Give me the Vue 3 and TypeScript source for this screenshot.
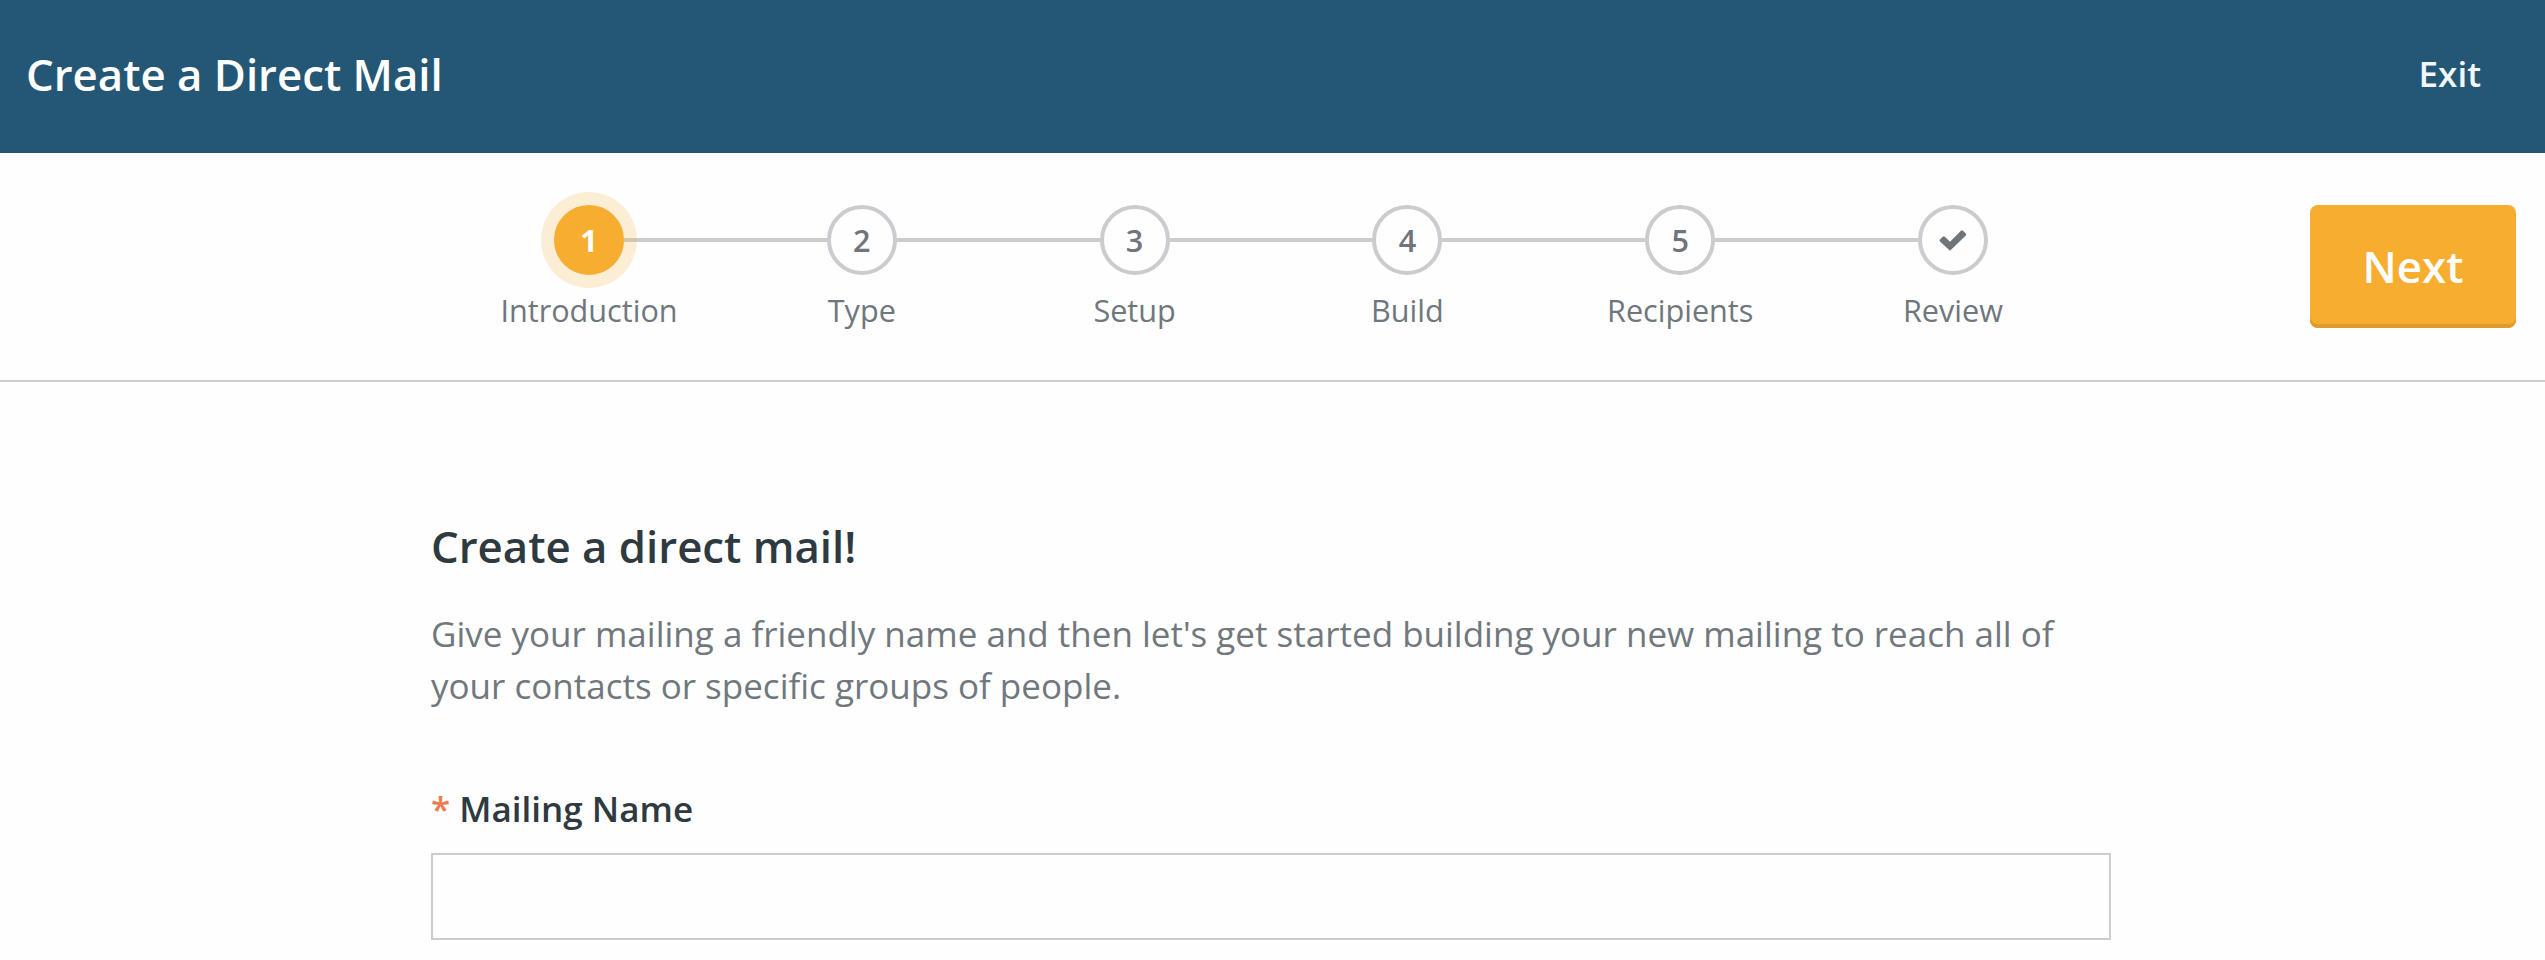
<script setup lang="ts">
import { ref } from 'vue'

interface Step {
  label: string
  marker: string
}

const steps: Step[] = [
  { label: 'Introduction', marker: '1' },
  { label: 'Type', marker: '2' },
  { label: 'Setup', marker: '3' },
  { label: 'Build', marker: '4' },
  { label: 'Recipients', marker: '5' },
  { label: 'Review', marker: '' },
]
const current = ref(0)
const mailingName = ref('')

function next(): void {
  current.value = Math.min(current.value + 1, steps.length - 1)
}
</script>

<template>
  <div class="page">
    <header class="topbar">
      <h1 class="title">Create a Direct Mail</h1>
      <a class="exit">Exit</a>
    </header>

    <nav class="wizard">
      <ol class="steps">
        <li v-for="(step, i) in steps" :key="step.label" class="step" :class="{ active: i === current }">
          <div class="track">
            <span class="line" :class="{ hidden: i === 0 }"></span>
            <span class="circle">
              <template v-if="step.marker">{{ step.marker }}</template>
              <svg v-else class="check" viewBox="0 0 28 22">
                <path d="M11 21.8 L1 12.5 Q0 11.5 1 10.5 L3.8 7.7 Q4.8 6.8 5.8 7.7 L11 12.8 L22 1.8 Q23 .9 24 1.8 L26.8 4.6 Q27.7 5.6 26.8 6.6 Z" />
              </svg>
            </span>
            <span class="line" :class="{ hidden: i === steps.length - 1 }"></span>
          </div>
          <span class="step-label">{{ step.label }}</span>
        </li>
      </ol>
      <button class="next" type="button" @click="next">Next</button>
    </nav>

    <main class="content">
      <h2 class="heading">Create a direct mail!</h2>
      <p class="intro">Give your mailing a friendly name and then let's get started building your new mailing to reach all of your contacts or specific groups of people.</p>
      <label class="label" for="mailing-name"><span class="required">*</span> Mailing Name</label>
      <input id="mailing-name" v-model="mailingName" class="input" type="text" />
    </main>
  </div>
</template>

<style>
body {
  margin: 0;
  background: #fff;
}
</style>

<style scoped>
.page {
  height: 960px;
  overflow: hidden;
  background: #fefefe;
  color: #6f777d;
  font-family: "Open Sans", "Noto Sans", sans-serif;
}
.topbar {
  box-sizing: border-box;
  height: 153px;
  padding: 0 64px 5px 26px;
  display: flex;
  align-items: center;
  justify-content: space-between;
  background: #245675;
  color: #fff;
}
.title {
  margin: 0;
  font-size: 43.75px;
  line-height: 60px;
  font-weight: 600;
}
.exit {
  font-size: 35px;
  line-height: 50px;
  font-weight: 600;
  color: #f1f6fa;
}
.wizard {
  box-sizing: border-box;
  height: 229px;
  padding: 52px 29px 0 452.6px;
  display: flex;
  align-items: flex-start;
  justify-content: space-between;
  border-bottom: 2px solid #cbcfd2;
}
.steps {
  margin: 0;
  padding: 0;
  display: flex;
  list-style: none;
}
.step {
  width: 272.8px;
  display: flex;
  flex-direction: column;
  align-items: center;
}
.track {
  width: 100%;
  display: flex;
  align-items: center;
}
.line {
  flex: 1;
  height: 4px;
  background: #cacccf;
}
.line.hidden {
  visibility: hidden;
}
.circle {
  box-sizing: border-box;
  width: 70px;
  height: 70px;
  border: 4px solid #cacccf;
  border-radius: 50%;
  display: flex;
  align-items: center;
  justify-content: center;
  font-size: 30.625px;
  line-height: 40px;
  font-weight: 600;
  color: #6f757b;
}
.active .circle {
  position: relative;
  border-color: #f7ad2f;
  background: #f7ad2f;
  box-shadow: 0 0 0 13px rgba(247, 173, 47, 0.2);
  font-weight: 700;
  color: #fff;
}
.check {
  width: 28px;
  height: 22px;
  fill: #6f757b;
}
.step-label {
  margin-top: 15px;
  font-size: 30.625px;
  line-height: 40px;
}
.next {
  box-sizing: border-box;
  width: 206px;
  height: 123px;
  padding: 0 0 1px;
  border: 0;
  border-radius: 8px;
  background: #f7ad2f;
  box-shadow: inset 0 -4px 0 #df9b2b;
  font: 600 43.75px/60px "Open Sans", "Noto Sans", sans-serif;
  color: #fff;
}
.content {
  width: 1680px;
  padding: 134px 0 0 431px;
}
.heading {
  margin: 0;
  font-size: 43.75px;
  line-height: 60px;
  font-weight: 600;
  color: #2e3a40;
}
.intro {
  margin: 32px 0 0;
  font-size: 35px;
  line-height: 52px;
  color: #70787d;
}
.label {
  display: block;
  margin-top: 72px;
  font-size: 35px;
  line-height: 50px;
  font-weight: 600;
  color: #2e3a40;
}
.required {
  color: #ee7a50;
}
.input {
  display: block;
  box-sizing: border-box;
  width: 1680px;
  height: 87px;
  margin: 19px 0 0;
  padding: 0 24px;
  border: 2px solid #cacccf;
  border-radius: 0;
  outline: none;
  background: #fefefe;
  font: 35px/50px "Open Sans", "Noto Sans", sans-serif;
  color: #2e3a40;
}
</style>
